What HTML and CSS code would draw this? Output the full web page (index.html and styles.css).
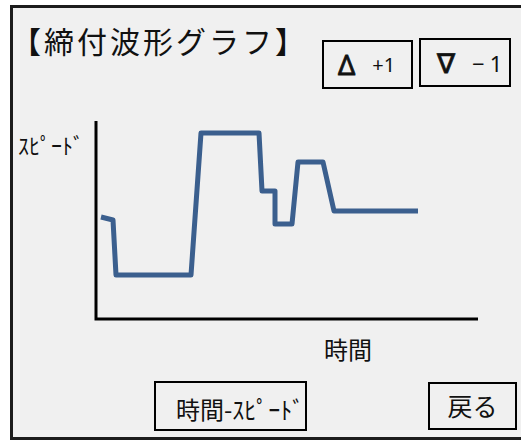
FILE: index.html
```html
<!DOCTYPE html>
<html lang="ja">
<head>
<meta charset="utf-8">
<link rel="stylesheet" href="styles.css">
</head>
<body>
<div class="frame">
  <div class="header">
    <div class="title">【締付波形グラフ】</div>
    <div class="step step-up"><span class="sym">Δ</span><span class="num num-up">+1</span></div>
    <div class="step step-down"><span class="sym">∇</span><span class="num num-down">−1</span></div>
  </div>
  <div class="chart-row">
    <div class="y-label">ｽﾋﾟｰﾄﾞ</div>
    <svg class="chart" width="400" height="210" viewBox="0 0 400 210">
      <polyline points="11,102 23,105 26,160 101,160 111,18 169,18 172,76 185,76 185,109 202,109 208,47 233,47 244,96 328,96" fill="none" stroke="#3b5f8e" stroke-width="5" stroke-linejoin="round"/>
      <polyline points="6,6 6,204 388,204" fill="none" stroke="#000" stroke-width="3"/>
    </svg>
  </div>
  <div class="x-label">時間</div>
  <div class="footer">
    <div class="btn btn-mode">時間-ｽﾋﾟｰﾄﾞ</div>
    <div class="btn btn-back">戻る</div>
  </div>
</div>
</body>
</html>
```

FILE: styles.css
```css
html, body {
  margin: 0;
  padding: 0;
  background: #ffffff;
  overflow: hidden;
}
body {
  width: 521px;
  height: 441px;
  font-family: "Noto Sans CJK JP", "Noto Sans", sans-serif;
  color: #111;
}
.frame {
  box-sizing: content-box;
  margin: 5px 0 0 10px;
  width: 530px;
  height: 429px;
  border: 3px solid #1c1c1c;
  border-right: none;
  background: #f0f0f0;
}
.header {
  display: flex;
  align-items: flex-start;
  height: 107px;
}
.title {
  width: 311px;
  margin-left: -2px;
  margin-top: 14px;
  font-size: 30px;
  line-height: 36px;
  letter-spacing: 3px;
  white-space: nowrap;
}
.step {
  box-sizing: border-box;
  height: 49px;
  border: 2px solid #000;
  display: flex;
  align-items: center;
  font-family: "Noto Sans", "DejaVu Sans", sans-serif;
}
.step-up {
  width: 91px;
  margin-top: 32px;
  padding-left: 14px;
}
.step-down {
  width: 92px;
  margin-left: 6px;
  margin-top: 30px;
  padding-left: 16px;
}
.sym {
  font-size: 27px;
  line-height: 1;
  -webkit-text-stroke: 0.8px #111;
}
.num {
  line-height: 1;
}
.num-up {
  font-size: 20px;
  margin-left: 17px;
}
.num-down {
  font-size: 22px;
  margin-left: 17px;
  letter-spacing: 5px;
}
.chart-row {
  display: flex;
  align-items: flex-start;
  height: 210px;
}
.y-label {
  width: 72px;
  margin-left: 5px;
  margin-top: 17px;
  font-size: 22px;
  line-height: 24px;
  white-space: nowrap;
}
.chart {
  display: block;
}
.x-label {
  margin-left: 311px;
  margin-top: 10px;
  font-size: 24px;
  line-height: 28px;
}
.footer {
  display: flex;
  align-items: flex-start;
  margin-top: 18px;
}
.btn {
  box-sizing: border-box;
  border: 2px solid #000;
  background: #f0f0f0;
  white-space: nowrap;
  overflow: hidden;
}
.btn-mode {
  width: 153px;
  height: 50px;
  margin-left: 141px;
  padding-left: 20px;
  padding-top: 12px;
  font-size: 24px;
  line-height: 28px;
}
.btn-back {
  width: 89px;
  height: 48px;
  margin-left: 121px;
  margin-top: 1px;
  text-align: center;
  padding-top: 6px;
  font-size: 25px;
  line-height: 30px;
}
```
